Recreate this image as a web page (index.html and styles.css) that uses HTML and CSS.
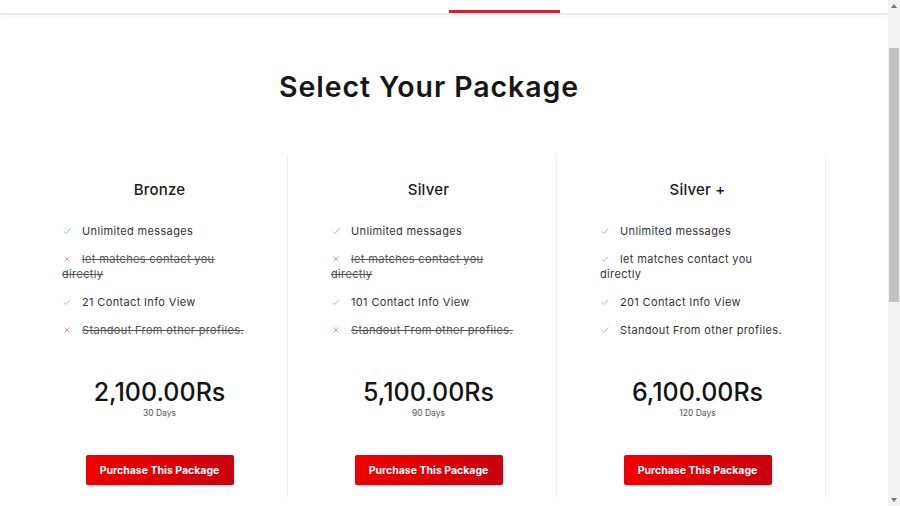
FILE: index.html
```html
<!DOCTYPE html>
<html>
<head>
<meta charset="utf-8">
<link rel="stylesheet" href="styles.css">
</head>
<body>
<div class="page">
  <div class="nav"><div class="tab"></div></div>
  <div class="container">
    <h1 class="title">Select Your Package</h1>
    <div class="plans">
      <div class="plan">
        <h2 class="plan-name">Bronze</h2>
        <ul class="features">
          <li class="yes"><svg class="ic" viewBox="0 0 10 10"><path d="M1 5.5 L3.8 8 L9 2"/></svg>Unlimited messages</li>
          <li class="no"><svg class="ic" viewBox="0 0 10 10"><path d="M2 2 L8 8 M8 2 L2 8"/></svg><span>let matches contact you directly</span></li>
          <li class="yes"><svg class="ic" viewBox="0 0 10 10"><path d="M1 5.5 L3.8 8 L9 2"/></svg>21 Contact Info View</li>
          <li class="no"><svg class="ic" viewBox="0 0 10 10"><path d="M2 2 L8 8 M8 2 L2 8"/></svg><span>Standout From other profiles.</span></li>
        </ul>
        <div class="price">2,100.00Rs</div>
        <div class="days">30 Days</div>
        <button class="buy">Purchase This Package</button>
      </div>
      <div class="plan">
        <h2 class="plan-name">Silver</h2>
        <ul class="features">
          <li class="yes"><svg class="ic" viewBox="0 0 10 10"><path d="M1 5.5 L3.8 8 L9 2"/></svg>Unlimited messages</li>
          <li class="no"><svg class="ic" viewBox="0 0 10 10"><path d="M2 2 L8 8 M8 2 L2 8"/></svg><span>let matches contact you directly</span></li>
          <li class="yes"><svg class="ic" viewBox="0 0 10 10"><path d="M1 5.5 L3.8 8 L9 2"/></svg>101 Contact Info View</li>
          <li class="no"><svg class="ic" viewBox="0 0 10 10"><path d="M2 2 L8 8 M8 2 L2 8"/></svg><span>Standout From other profiles.</span></li>
        </ul>
        <div class="price">5,100.00Rs</div>
        <div class="days">90 Days</div>
        <button class="buy">Purchase This Package</button>
      </div>
      <div class="plan">
        <h2 class="plan-name">Silver +</h2>
        <ul class="features">
          <li class="yes"><svg class="ic" viewBox="0 0 10 10"><path d="M1 5.5 L3.8 8 L9 2"/></svg>Unlimited messages</li>
          <li class="yes"><svg class="ic" viewBox="0 0 10 10"><path d="M1 5.5 L3.8 8 L9 2"/></svg>let matches contact you directly</li>
          <li class="yes"><svg class="ic" viewBox="0 0 10 10"><path d="M1 5.5 L3.8 8 L9 2"/></svg>201 Contact Info View</li>
          <li class="yes"><svg class="ic" viewBox="0 0 10 10"><path d="M1 5.5 L3.8 8 L9 2"/></svg>Standout From other profiles.</li>
        </ul>
        <div class="price">6,100.00Rs</div>
        <div class="days">120 Days</div>
        <button class="buy">Purchase This Package</button>
      </div>
    </div>
  </div>
</div>
<div class="scrollbar">
  <div class="arrow up"></div>
  <div class="track"><div class="thumb"></div></div>
  <div class="arrow down"></div>
</div>
</body>
</html>
```
FILE: styles.css
```css
html, body {
  margin: 0;
  padding: 0;
  height: 506px;
  overflow: hidden;
  background: #fff;
}
body {
  display: flex;
  font-family: Inter, "Noto Sans", sans-serif;
  color: #222;
}
.page {
  flex: 1;
  min-width: 0;
}
.nav {
  height: 13px;
  border-bottom: 2px solid #ebebeb;
  box-shadow: 0 2px 3px rgba(0,0,0,0.03);
  box-sizing: content-box;
  padding-left: 449px;
}
.tab {
  width: 111px;
  height: 13px;
  box-sizing: border-box;
  border-bottom: 3px solid #d8202a;
}
.container {
  width: 820px;
  margin-left: 19px;
}
.title {
  margin: 55px 0 0;
  text-align: center;
  font-size: 28.5px;
  line-height: 34px;
  font-weight: 600;
  color: #161616;
  letter-spacing: 0.9px;
}
.plans {
  display: flex;
  margin-top: 51px;
}
.plan {
  width: 269px;
  height: 342px;
  box-sizing: border-box;
  border-right: 1px solid #efefef;
  padding-left: 13px;
  display: flex;
  flex-direction: column;
  align-items: center;
}
.plan-name {
  margin: 26px 0 0;
  font-size: 15px;
  line-height: 18px;
  font-weight: 500;
  color: #1a1a1a;
  letter-spacing: 0.2px;
}
.features {
  list-style: none;
  margin: 25px 0 0;
  padding: 0;
  align-self: flex-start;
  margin-left: 30px;
  width: 190px;
  font-size: 11px;
  line-height: 15px;
  letter-spacing: 0.35px;
  color: #333;
}
.features li {
  margin-bottom: 13px;
}
.ic {
  width: 8px;
  height: 8px;
  margin: 0 11px 0 1px;
  vertical-align: 0;
  fill: none;
  stroke-width: 1;
}
.yes .ic { stroke: #8fb3a6; }
.no .ic { stroke: #e07a8a; }
.no span {
  text-decoration: line-through;
  color: #555;
}
.price {
  margin-top: 28px;
  font-size: 25px;
  line-height: 26px;
  font-weight: 500;
  color: #141414;
}
.days {
  margin-top: 3px;
  font-size: 8.5px;
  line-height: 10px;
  color: #555;
}
.buy {
  margin-top: 37px;
  width: 148px;
  height: 30px;
  border: none;
  border-radius: 2px;
  background: linear-gradient(90deg, #ee0000, #c90010);
  color: #fff;
  font-family: Inter, "Noto Sans", sans-serif;
  font-size: 10.5px;
  font-weight: 700;
  box-shadow: 0 1px 2px rgba(0,0,0,0.15);
}
.scrollbar {
  width: 12px;
  background: #f1f1f1;
  display: flex;
  flex-direction: column;
}
.arrow {
  height: 12px;
  display: flex;
  align-items: center;
  justify-content: center;
}
.arrow::before {
  content: "";
  border-left: 3px solid transparent;
  border-right: 3px solid transparent;
}
.up::before { border-bottom: 4px solid #777; }
.down::before { border-top: 4px solid #777; }
.track {
  flex: 1;
  padding-top: 36px;
}
.thumb {
  margin: 0 1px;
  height: 254px;
  background: #c1c1c1;
}
```
